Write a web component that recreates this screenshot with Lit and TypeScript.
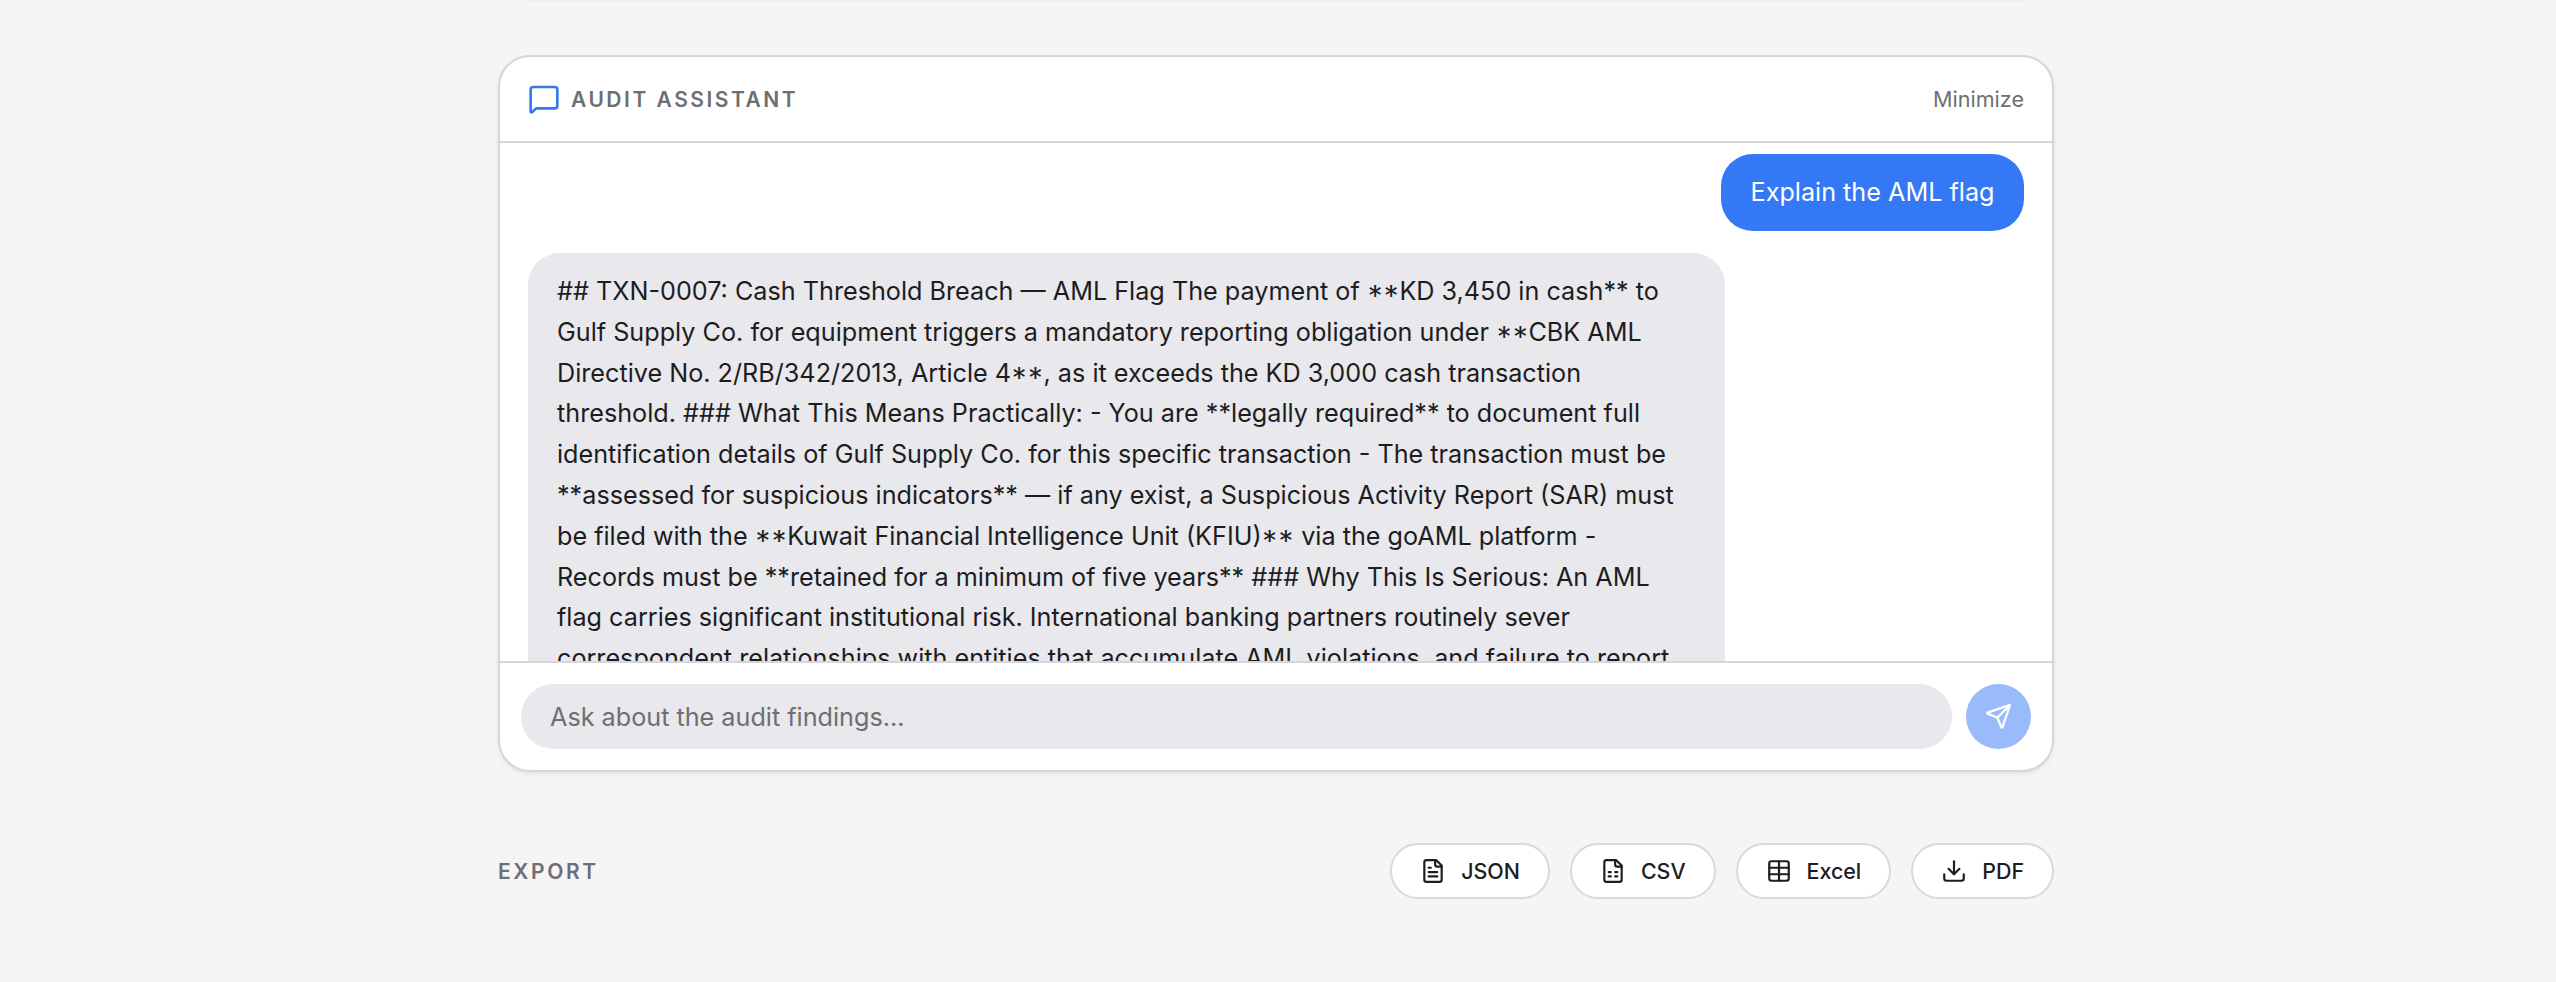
import { LitElement, css, html, svg } from 'lit';
import { customElement } from 'lit/decorators.js';

const REPLY =
	'## TXN-0007: Cash Threshold Breach — AML Flag The payment of **KD 3,450 in cash** to Gulf Supply Co. for equipment triggers a mandatory reporting obligation under **CBK AML Directive No. 2/RB/342/2013, Article 4**, as it exceeds the KD 3,000 cash transaction threshold. ### What This Means Practically: - You are **legally required** to document full identification details of Gulf Supply Co. for this specific transaction - The transaction must be **assessed for suspicious indicators** — if any exist, a Suspicious Activity Report (SAR) must be filed with the **Kuwait Financial Intelligence Unit (KFIU)** via the goAML platform - Records must be **retained for a minimum of five years** ### Why This Is Serious: An AML flag carries significant institutional risk. International banking partners routinely sever correspondent relationships with entities that accumulate AML violations, and failure to report';

const EXPORTS = [
	{
		label: 'JSON',
		icon: svg`<path d="M15 2H6a2 2 0 0 0-2 2v16a2 2 0 0 0 2 2h12a2 2 0 0 0 2-2V7Z"/><path d="M14 2v4a2 2 0 0 0 2 2h4"/><path d="M10 9H8"/><path d="M16 13H8"/><path d="M16 17H8"/>`,
	},
	{
		label: 'CSV',
		icon: svg`<path d="M15 2H6a2 2 0 0 0-2 2v16a2 2 0 0 0 2 2h12a2 2 0 0 0 2-2V7Z"/><path d="M14 2v4a2 2 0 0 0 2 2h4"/><path d="M8 13h2"/><path d="M14 13h2"/><path d="M8 17h2"/><path d="M14 17h2"/>`,
	},
	{
		label: 'Excel',
		icon: svg`<path d="M12 3v18"/><rect width="18" height="18" x="3" y="3" rx="2"/><path d="M3 9h18"/><path d="M3 15h18"/>`,
	},
	{
		label: 'PDF',
		icon: svg`<path d="M21 15v4a2 2 0 0 1-2 2H5a2 2 0 0 1-2-2v-4"/><path d="m7 10 5 5 5-5"/><path d="M12 15V3"/>`,
	},
];

// asterisks beside capitals and digits sit at cap height in the reference
function renderReply() {
	return REPLY.split(/(\*\*(?=[A-Z])|(?<=[0-9)])\*\*)/).map((part) =>
		part === '**' ? html`<span class="caps">**</span>` : part,
	);
}

@customElement('app-root')
export class AppRoot extends LitElement {
	static styles = css`
		:host {
			display: block;
			height: 982px;
			background: #f5f5f7;
			font-family: Inter, 'Liberation Sans', sans-serif;
			color: #1d1d1f;
			overflow: hidden;
		}

		.page {
			box-sizing: border-box;
			width: 1556px;
			margin-left: 498px;
			padding-top: 55px;
		}

		/* bottom edge of the section scrolled off above the card */
		.prev {
			height: 2px;
			margin: -57px 27px 55px;
			background: #f7f7f8;
			box-shadow: 0 1px 3px rgba(0, 0, 0, 0.05);
		}

		.card {
			display: flex;
			flex-direction: column;
			height: 717px;
			box-sizing: border-box;
			background: #fff;
			border: 2px solid #d6d6da;
			border-radius: 32px;
			box-shadow: 0 2px 4px rgba(0, 0, 0, 0.08);
			overflow: hidden;
		}

		.header {
			display: flex;
			flex: none;
			align-items: center;
			justify-content: space-between;
			box-sizing: border-box;
			height: 86px;
			padding: 0 28px;
			border-bottom: 2px solid #d6d6da;
		}

		.title {
			display: flex;
			align-items: center;
			gap: 11px;
			font-size: 21px;
			font-weight: 600;
			letter-spacing: 2.52px;
			color: #6e6e73;
		}

		.title svg {
			width: 32px;
			height: 32px;
			fill: none;
			stroke: #3478f6;
			stroke-width: 2;
			stroke-linecap: round;
			stroke-linejoin: round;
		}

		.minimize {
			font-size: 21.6px;
			color: #6e6e73;
		}

		.messages {
			display: flex;
			flex: 1;
			flex-direction: column;
			gap: 22px;
			min-height: 0;
			padding: 11px 28px 0;
			overflow: hidden;
		}

		.user {
			align-self: flex-end;
			flex: none;
			padding: 18px 29.5px;
			background: #3478f6;
			border-radius: 32px;
			color: #fff;
			font-size: 25.2px;
			line-height: 41px;
		}

		.bot {
			align-self: flex-start;
			flex: none;
			box-sizing: border-box;
			width: 1197px;
			padding: 18px 29px;
			background: #e8e8ed;
			border-radius: 32px;
			font-size: 25.2px;
			line-height: 40.8px;
		}

		.caps {
			font-feature-settings: 'case' 1;
		}

		.composer {
			display: flex;
			flex: none;
			align-items: center;
			gap: 14px;
			padding: 21px;
			border-top: 2px solid #d6d6da;
		}

		.input {
			display: flex;
			flex: 1;
			align-items: center;
			height: 65px;
			padding: 0 29px;
			background: #e8e8ed;
			border-radius: 33px;
			font-size: 25.2px;
			color: #6e6e73;
		}

		.send {
			display: flex;
			flex: none;
			align-items: center;
			justify-content: center;
			width: 65px;
			height: 65px;
			background: #9abbfb;
			border-radius: 50%;
		}

		.send svg {
			width: 27px;
			height: 27px;
			fill: none;
			stroke: #fff;
			stroke-width: 2;
			stroke-linecap: round;
			stroke-linejoin: round;
		}

		.export {
			display: flex;
			align-items: center;
			justify-content: space-between;
			margin-top: 71px;
		}

		.export-label {
			font-size: 21px;
			font-weight: 600;
			letter-spacing: 2.6px;
			color: #6e6e73;
		}

		.buttons {
			display: flex;
			gap: 20px;
		}

		.button {
			display: flex;
			align-items: center;
			gap: 15px;
			height: 56px;
			box-sizing: border-box;
			padding: 0 28px;
			background: #fff;
			border: 2px solid #d9d9de;
			border-radius: 28px;
			font-size: 21.4px;
			font-weight: 500;
		}

		.button svg {
			width: 26px;
			height: 26px;
			fill: none;
			stroke: #1d1d1f;
			stroke-width: 2;
			stroke-linecap: round;
			stroke-linejoin: round;
		}
	`;

	render() {
		return html`
			<div class="page">
				<div class="prev"></div>
				<div class="card">
					<div class="header">
						<div class="title">
							<svg viewBox="0 0 24 24">
								<path d="M22 17a2 2 0 0 1-2 2H6.83a2 2 0 0 0-1.41.59l-2.2 2.2A.71.71 0 0 1 2 21.29V5a2 2 0 0 1 2-2h16a2 2 0 0 1 2 2z" />
							</svg>
							AUDIT ASSISTANT
						</div>
						<div class="minimize">Minimize</div>
					</div>
					<div class="messages">
						<div class="user">Explain the AML flag</div>
						<div class="bot">${renderReply()}</div>
					</div>
					<div class="composer">
						<div class="input">Ask about the audit findings...</div>
						<div class="send">
							<svg viewBox="0 0 24 24">
								<path d="M14.536 21.686a.5.5 0 0 0 .937-.024l6.5-19a.496.496 0 0 0-.635-.635l-19 6.5a.5.5 0 0 0-.024.937l7.93 3.18a2 2 0 0 1 1.112 1.11z" />
								<path d="m21.854 2.147-10.94 10.939" />
							</svg>
						</div>
					</div>
				</div>
				<div class="export">
					<div class="export-label">EXPORT</div>
					<div class="buttons">
						${EXPORTS.map(
							(item) => html`
								<div class="button">
									<svg viewBox="0 0 24 24">${item.icon}</svg>
									${item.label}
								</div>
							`,
						)}
					</div>
				</div>
			</div>
		`;
	}
}

declare global {
	interface HTMLElementTagNameMap {
		'app-root': AppRoot;
	}
}
